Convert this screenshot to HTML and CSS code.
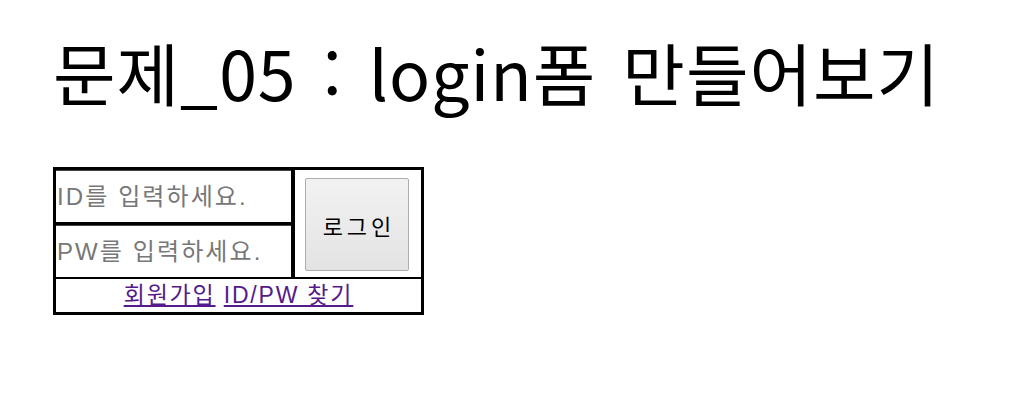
FILE: index.html
```html
<!DOCTYPE html>
<html lang="ko">
<head>
<meta charset="utf-8">
<title>login</title>
<link rel="stylesheet" href="styles.css">
</head>
<body>
<div class="page">
  <h1 class="title">문제_05 : login폼 만들어보기</h1>
  <form class="login">
    <div class="inputs">
      <div class="field"><input class="text" type="text" placeholder="ID를 입력하세요."></div>
      <div class="hsep"></div>
      <div class="field"><input class="text" type="password" placeholder="PW를 입력하세요."></div>
    </div>
    <div class="vsep"></div>
    <div class="btncell"><button class="btn" type="button">로그인</button></div>
    <div class="links"><a class="link" href="#join">회원가입</a> <a class="link" href="#find">ID/PW 찾기</a></div>
  </form>
</div>
</body>
</html>
```

FILE: styles.css
```css
html, body {
  margin: 0;
  padding: 0;
  background: #fff;
}
.page {
  padding: 22px 0 0 53px;
  font-family: "Liberation Sans", "Noto Sans CJK KR", sans-serif;
}
.title {
  margin: 0 0 45px 0;
  font-family: "Noto Sans CJK KR", sans-serif;
  font-weight: 400;
  font-size: 68px;
  line-height: 100px;
  color: #000;
  letter-spacing: 1px;
  word-spacing: 6px;
  white-space: nowrap;
}
.login {
  width: 371px;
  height: 148px;
  box-sizing: border-box;
  border: 3px solid #000;
  display: grid;
  grid-template-columns: 235px 4px 1fr;
  grid-template-rows: 109px 31px;
}
.inputs {
  display: flex;
  flex-direction: column;
  border-bottom: 2px solid #000;
}
.field {
  flex: 1;
  display: flex;
}
.hsep {
  height: 3px;
  background: #000;
}
.text {
  flex: 1;
  margin: 0;
  min-width: 0;
  border: none;
  border-top: 1px solid #444;
  padding: 0 0 0 1px;
  font-family: "Liberation Sans", "Noto Sans CJK KR", sans-serif;
  font-size: 24px;
  letter-spacing: 2.1px;
  color: #000;
  outline: none;
}
.text::placeholder {
  color: #777;
}
.vsep {
  background: #000;
  border-bottom: 2px solid #000;
}
.btncell {
  display: flex;
  padding: 8px 12px 6px 10px;
  border-bottom: 2px solid #000;
}
.btn {
  flex: 1;
  margin: 0;
  border: 1px solid #adadad;
  border-radius: 2px;
  background: linear-gradient(#f2f2f2, #e3e3e3);
  font-family: "Noto Sans CJK KR", sans-serif;
  font-size: 22px;
  font-weight: 400;
  color: #000;
  letter-spacing: 4px;
  text-indent: 4px;
}
.links {
  grid-column: 1 / 4;
  text-align: center;
  font-size: 23px;
  letter-spacing: 1.8px;
  line-height: 30px;
  padding-top: 1px;
}
.link {
  color: #551a8b;
}
```
